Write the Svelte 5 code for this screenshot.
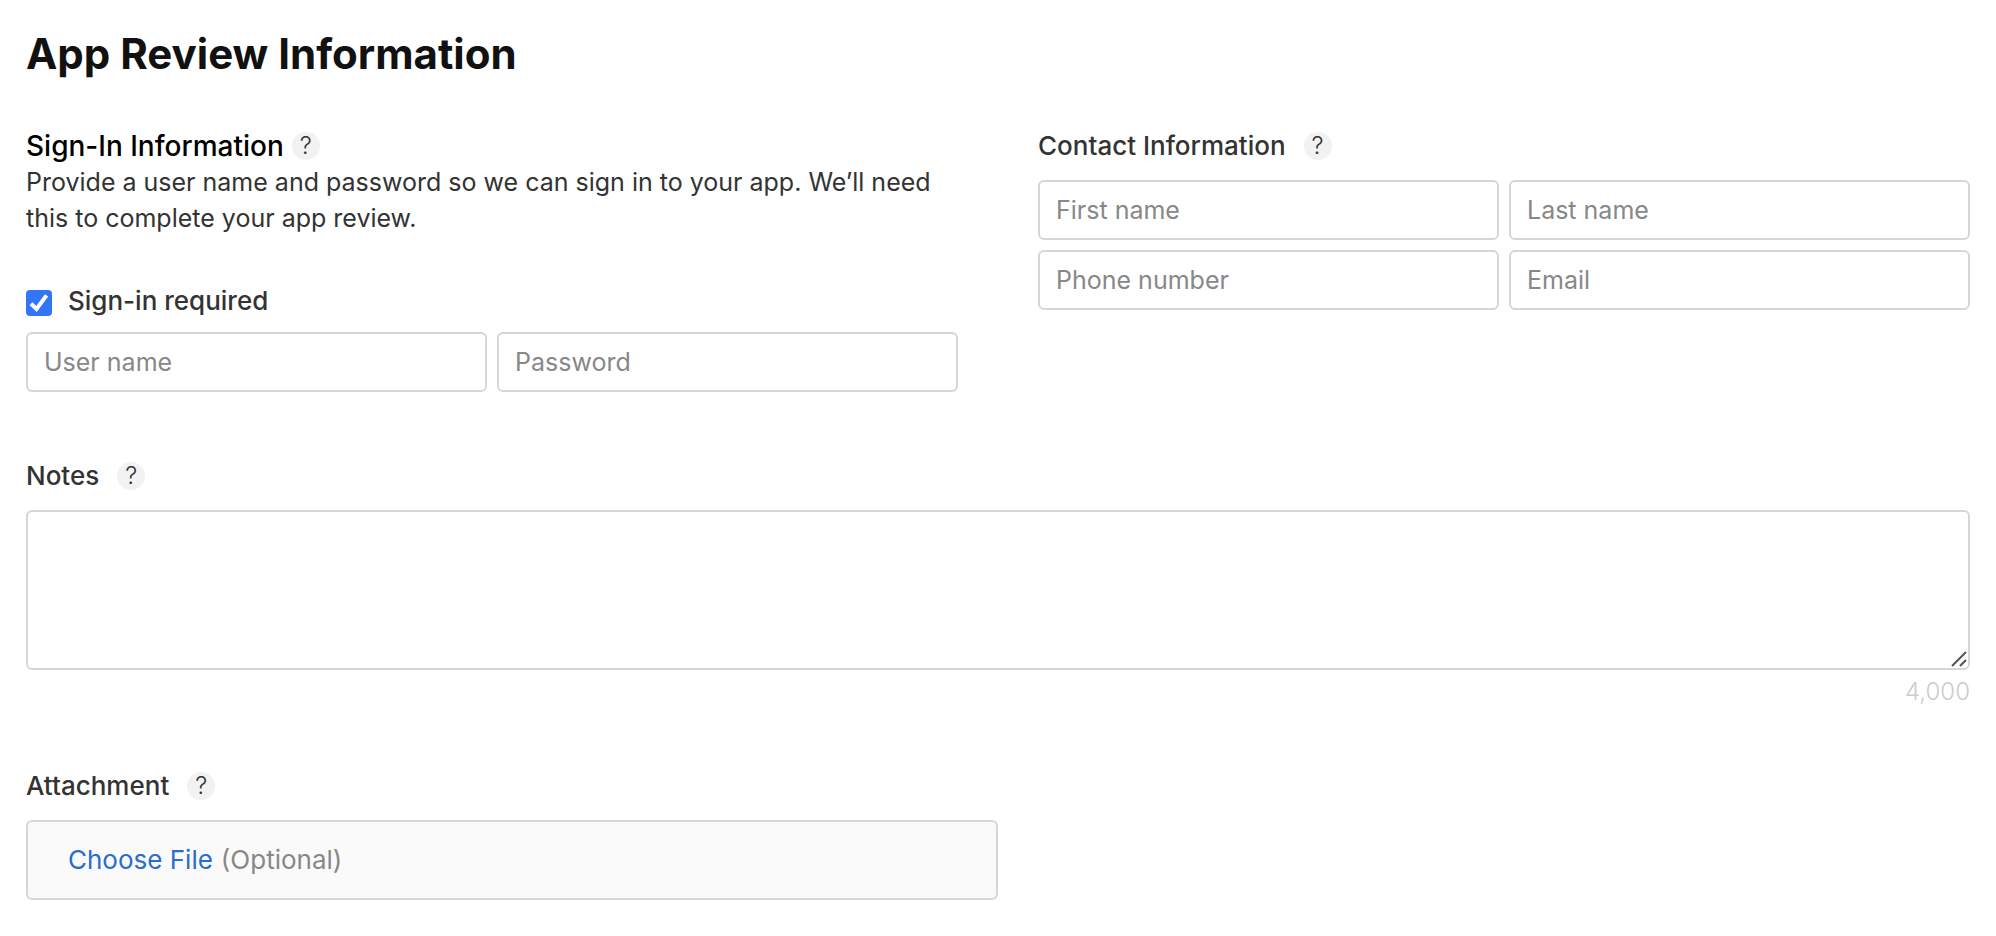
<script>
  const limit = 4000;

  let signInRequired = $state(true);
  let notes = $state('');
  let fileName = $state('');

  let remaining = $derived((limit - notes.length).toLocaleString('en-US'));

  const contactFields = [
    { id: 'first-name', label: 'First name', type: 'text' },
    { id: 'last-name', label: 'Last name', type: 'text' },
    { id: 'phone', label: 'Phone number', type: 'tel' },
    { id: 'email', label: 'Email', type: 'email' }
  ];

  function pickFile(event) {
    fileName = event.currentTarget.files[0]?.name ?? '';
  }
</script>

{#snippet help(topic)}
  <button class="help" type="button" aria-label={topic}>?</button>
{/snippet}

<main>
  <h1>App Review Information</h1>

  <form>
    <div class="columns">
      <section>
        <div class="heading tight">
          <h2>Sign-In Information</h2>
          {@render help('About sign-in information')}
        </div>
        <p>Provide a user name and password so we can sign in to your app. We’ll need this to complete your app review.</p>

        <label class="check">
          <input type="checkbox" bind:checked={signInRequired} />
          <span>Sign-in required</span>
        </label>
        <div class="fields">
          <input type="text" aria-label="User name" placeholder="User name" disabled={!signInRequired} />
          <input type="text" aria-label="Password" placeholder="Password" disabled={!signInRequired} />
        </div>
      </section>

      <section>
        <div class="heading spaced">
          <h3>Contact Information</h3>
          {@render help('About contact information')}
        </div>
        <div class="fields">
          {#each contactFields as field (field.id)}
            <input id={field.id} type={field.type} aria-label={field.label} placeholder={field.label} />
          {/each}
        </div>
      </section>
    </div>

    <section class="notes">
      <div class="heading spaced">
        <label for="notes">Notes</label>
        {@render help('About notes')}
      </div>
      <div class="area">
        <textarea id="notes" maxlength={limit} bind:value={notes}></textarea>
        <svg class="grip" viewBox="0 0 16 16" aria-hidden="true">
          <path d="M1 15 15 1M9 15l6-6" />
        </svg>
      </div>
      <div class="count">{remaining}</div>
    </section>

    <section class="attachment">
      <div class="heading spaced">
        <h3>Attachment</h3>
        {@render help('About attachments')}
      </div>
      <div class="drop">
        <input class="file" id="file" type="file" onchange={pickFile} />
        <label class="choose" for="file">Choose File</label>
        <span>{fileName || '(Optional)'}</span>
      </div>
    </section>
  </form>
</main>

<style>
  :global(body) {
    margin: 0;
    background: #fff;
  }

  main {
    padding: 30px 26px 36px;
    font-family: Inter, 'Liberation Sans', sans-serif;
    font-size: 25px;
    line-height: 36px;
    color: #333;
  }

  h1,
  h2,
  h3,
  p {
    margin: 0;
  }

  h1 {
    margin-bottom: 50px;
    font-size: 42px;
    font-weight: 700;
    line-height: 48px;
    color: #111;
  }

  h2,
  h3 {
    font-size: inherit;
    font-weight: 500;
  }

  h2 {
    font-size: 28px;
    color: #000;
  }

  .columns {
    display: grid;
    grid-template-columns: 1fr 1fr;
    gap: 80px;
  }

  .heading,
  .check {
    display: flex;
    align-items: center;
    font-size: 26px;
    font-weight: 500;
  }

  .tight {
    gap: 8px;
  }

  .spaced {
    gap: 18px;
    margin-bottom: 16px;
  }

  .help {
    flex: none;
    width: 28px;
    height: 28px;
    padding: 0;
    border: 0;
    border-radius: 50%;
    background: #f2f2f2;
    color: #333;
    font: 300 24px/28px Inter, 'Liberation Sans', sans-serif;
    text-align: center;
    cursor: pointer;
  }

  .check {
    gap: 16px;
    margin: 47px 0 13px;
  }

  .check input {
    appearance: none;
    flex: none;
    width: 26px;
    height: 26px;
    margin: 3px 0 0;
    border: 2px solid #d6d6d6;
    border-radius: 4px;
    background: #fff;
  }

  .check input:checked {
    border: 0;
    background: #3275f6 url("data:image/svg+xml,%3Csvg xmlns='http://www.w3.org/2000/svg' viewBox='0 0 26 26'%3E%3Cpath d='M5 13.8l5.5 5.2L20.6 5.4' fill='none' stroke='white' stroke-width='4'/%3E%3C/svg%3E");
  }

  .fields {
    display: grid;
    grid-template-columns: 1fr 1fr;
    gap: 10px;
  }

  .fields input,
  textarea {
    box-sizing: border-box;
    width: 100%;
    border: 2px solid #d6d6d6;
    border-radius: 6px;
    background: #fff;
    color: #333;
    font: inherit;
  }

  .fields input {
    height: 60px;
    padding: 0 16px;
  }

  .fields input::placeholder {
    color: #888;
    opacity: 1;
  }

  .notes {
    margin-top: 66px;
  }

  .area {
    position: relative;
  }

  textarea {
    display: block;
    height: 160px;
    padding: 12px 16px;
    resize: none;
  }

  .grip {
    position: absolute;
    right: 3px;
    bottom: 3px;
    width: 16px;
    height: 16px;
    fill: none;
    stroke: #555;
    stroke-width: 2;
    pointer-events: none;
  }

  .count {
    margin-top: 4px;
    font-size: 24px;
    font-weight: 300;
    text-align: right;
    color: #ccc;
  }

  .attachment {
    margin-top: 58px;
  }

  .drop {
    display: flex;
    align-items: center;
    gap: 8px;
    box-sizing: border-box;
    width: 50%;
    padding: 20px 40px;
    border: 2px solid #d6d6d6;
    border-radius: 6px;
    background: #fafafa;
    font-size: 26px;
    color: #888;
  }

  .file {
    position: absolute;
    width: 1px;
    height: 1px;
    opacity: 0;
  }

  .choose {
    color: #2a6dcb;
    cursor: pointer;
  }
</style>
